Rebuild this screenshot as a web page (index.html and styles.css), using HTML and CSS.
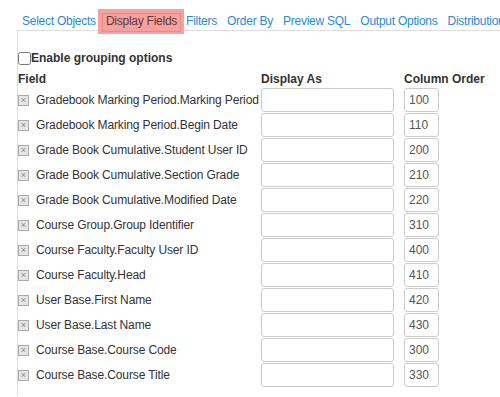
FILE: index.html
```html
<!DOCTYPE html>
<html>
<head>
<meta charset="utf-8">
<link rel="stylesheet" href="styles.css">
</head>
<body>
<nav class="tabs">
  <a class="tab">Select Objects</a>
  <a class="tab active"><span>Display Fields</span></a>
  <a class="tab">Filters</a>
  <a class="tab">Order By</a>
  <a class="tab">Preview SQL</a>
  <a class="tab">Output Options</a>
  <a class="tab">Distribution</a>
</nav>
<div class="panel">
  <label class="group"><input type="checkbox" class="cb">Enable grouping options</label>
  <div class="grid">
    <div class="hd">Field</div><div class="hd">Display As</div><div class="hd">Column Order</div>

    <div class="fld"><span class="x">×</span>Gradebook Marking Period.Marking Period</div><input class="da"><input class="co" value="100">
    <div class="fld"><span class="x">×</span>Gradebook Marking Period.Begin Date</div><input class="da"><input class="co" value="110">
    <div class="fld"><span class="x">×</span>Grade Book Cumulative.Student User ID</div><input class="da"><input class="co" value="200">
    <div class="fld"><span class="x">×</span>Grade Book Cumulative.Section Grade</div><input class="da"><input class="co" value="210">
    <div class="fld"><span class="x">×</span>Grade Book Cumulative.Modified Date</div><input class="da"><input class="co" value="220">
    <div class="fld"><span class="x">×</span>Course Group.Group Identifier</div><input class="da"><input class="co" value="310">
    <div class="fld"><span class="x">×</span>Course Faculty.Faculty User ID</div><input class="da"><input class="co" value="400">
    <div class="fld"><span class="x">×</span>Course Faculty.Head</div><input class="da"><input class="co" value="410">
    <div class="fld"><span class="x">×</span>User Base.First Name</div><input class="da"><input class="co" value="420">
    <div class="fld"><span class="x">×</span>User Base.Last Name</div><input class="da"><input class="co" value="430">
    <div class="fld"><span class="x">×</span>Course Base.Course Code</div><input class="da"><input class="co" value="300">
    <div class="fld"><span class="x">×</span>Course Base.Course Title</div><input class="da"><input class="co" value="330">
  </div>
</div>
</body>
</html>
```
FILE: styles.css
```css
html, body {
  margin: 0;
  padding: 0;
  background: #fff;
  font-family: "Liberation Sans", Arial, sans-serif;
  font-size: 12px;
  color: #333;
  overflow: hidden;
  height: 397px;
}
.tabs {
  display: flex;
  gap: 10px;
  height: 30px;
  padding-left: 22px;
  align-items: flex-start;
  position: relative;
  z-index: 2;
  white-space: nowrap;
  overflow: visible;
}
.tab {
  color: #2a8ad0;
  line-height: 14px;
  padding-top: 14px;
  letter-spacing: -0.25px;
  flex-shrink: 0;
}
.tab.active {
  background: #f7a0a0;
  margin: 9px -8px 0 -8px;
  padding: 4px 3px 2px 4px;
}
.tab.active span {
  display: block;
  border: 1px solid #e58a8a;
  color: #5a3a3a;
  padding: 0 3px 3px 3px;
  line-height: 14px;
}
.panel {
  margin-left: 17px;
  border-left: 1px solid #ddd;
  border-top: 1px solid #ddd;
  height: 366px;
  padding-top: 19px;
  box-sizing: border-box;
  position: relative;
  z-index: 1;
}
.group {
  display: flex;
  align-items: center;
  font-weight: bold;
  height: 16px;
}
.cb {
  margin: 0;
  width: 13px;
  height: 13px;
}
.grid {
  display: grid;
  grid-template-columns: 243px 133px 35px;
  grid-template-rows: 16px;
  grid-auto-rows: 25px;
  margin-top: 6px;
}
.grid > :nth-child(3n) {
  margin-left: 10px;
}
.hd {
  font-weight: bold;
  line-height: 14px;
  white-space: nowrap;
}
.fld {
  display: flex;
  align-items: center;
  white-space: nowrap;
  height: 24px;
  letter-spacing: -0.12px;
}
.x {
  flex-shrink: 0;
  display: inline-block;
  width: 9px;
  height: 9px;
  border: 1px solid #aaa;
  background: #e6e6e6;
  color: #888;
  font-size: 9px;
  line-height: 9px;
  text-align: center;
  margin-right: 7px;
  letter-spacing: 0;
}
input.da, input.co {
  box-sizing: border-box;
  height: 24px;
  border: 1px solid #ccc;
  border-radius: 3px;
  padding: 0 6px;
  font-family: "Liberation Sans", Arial, sans-serif;
  font-size: 12px;
  color: #555;
  margin: 0;
}
input.da { width: 133px; }
input.co { width: 35px; padding: 0 4px; }
```
